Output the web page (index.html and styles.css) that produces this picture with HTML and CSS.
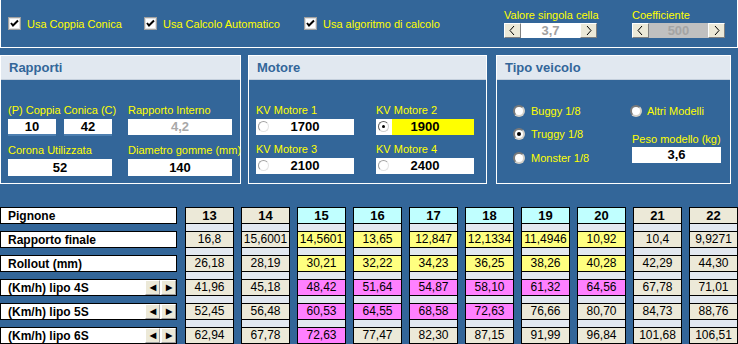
FILE: index.html
```html
<!DOCTYPE html>
<html lang="it">
<head>
    <meta charset="UTF-8">
    <title>Calcolo Rapporti</title>
    <link rel="stylesheet" href="styles.css">
</head>
<body>

    <!-- Opzioni in alto -->
    <div class="topbar">
        <div class="check c1">
            <svg class="box" width="13" height="13" viewBox="0 0 13 13"><rect x="0.5" y="0.5" width="12" height="12" fill="#fff" stroke="#a0a0a0"/><rect x="1.5" y="1.5" width="10" height="10" fill="#fff" stroke="#e0e0e0"/><polyline points="3,6 5,8.5 10,3.5" fill="none" stroke="#000" stroke-width="2"/></svg>
            Usa Coppia Conica
        </div>
        <div class="check c2">
            <svg class="box" width="13" height="13" viewBox="0 0 13 13"><rect x="0.5" y="0.5" width="12" height="12" fill="#fff" stroke="#a0a0a0"/><rect x="1.5" y="1.5" width="10" height="10" fill="#fff" stroke="#e0e0e0"/><polyline points="3,6 5,8.5 10,3.5" fill="none" stroke="#000" stroke-width="2"/></svg>
            Usa Calcolo Automatico
        </div>
        <div class="check c3">
            <svg class="box" width="13" height="13" viewBox="0 0 13 13"><rect x="0.5" y="0.5" width="12" height="12" fill="#fff" stroke="#a0a0a0"/><rect x="1.5" y="1.5" width="10" height="10" fill="#fff" stroke="#e0e0e0"/><polyline points="3,6 5,8.5 10,3.5" fill="none" stroke="#000" stroke-width="2"/></svg>
            Usa algoritmo di calcolo
        </div>

        <div class="spin-group s1">
            <div class="spin-label">Valore singola cella</div>
            <div class="spinner">
                <span class="spin-btn"><svg width="15" height="13" viewBox="0 0 15 13"><polyline points="9,2 5,6.5 9,11" fill="none" stroke="#000"/></svg></span>
                <span class="spin-val">3,7</span>
                <span class="spin-btn"><svg width="15" height="13" viewBox="0 0 15 13"><polyline points="6,2 10,6.5 6,11" fill="none" stroke="#000"/></svg></span>
            </div>
        </div>
        <div class="spin-group s2">
            <div class="spin-label">Coefficiente</div>
            <div class="spinner">
                <span class="spin-btn"><svg width="15" height="13" viewBox="0 0 15 13"><polyline points="9,2 5,6.5 9,11" fill="none" stroke="#000"/></svg></span>
                <span class="spin-val disabled">500</span>
                <span class="spin-btn"><svg width="15" height="13" viewBox="0 0 15 13"><polyline points="6,2 10,6.5 6,11" fill="none" stroke="#000"/></svg></span>
            </div>
        </div>
    </div>

    <!-- Pannelli -->
    <div class="panels">
        <div class="panel rapporti">
            <div class="panel-head">Rapporti</div>
            <div class="panel-body grid2">
                <div>
                    <div class="lbl">(P) Coppia Conica (C)</div>
                    <div class="pair">
                        <div class="field under">10</div>
                        <div class="field under">42</div>
                    </div>
                </div>
                <div>
                    <div class="lbl">Rapporto Interno</div>
                    <div class="field grey">4,2</div>
                </div>
                <div>
                    <div class="lbl">Corona Utilizzata</div>
                    <div class="field">52</div>
                </div>
                <div>
                    <div class="lbl">Diametro gomme (mm)</div>
                    <div class="field">140</div>
                </div>
            </div>
        </div>

        <div class="panel motore">
            <div class="panel-head">Motore</div>
            <div class="panel-body grid2">
                <div>
                    <div class="lbl">KV Motore 1</div>
                    <div class="field kv"><span class="mini-radio"></span>1700</div>
                </div>
                <div>
                    <div class="lbl">KV Motore 2</div>
                    <div class="field kv selected"><span class="mini-radio on"></span>1900</div>
                </div>
                <div>
                    <div class="lbl">KV Motore 3</div>
                    <div class="field kv"><span class="mini-radio"></span>2100</div>
                </div>
                <div>
                    <div class="lbl">KV Motore 4</div>
                    <div class="field kv"><span class="mini-radio"></span>2400</div>
                </div>
            </div>
        </div>

        <div class="panel veicolo">
            <div class="panel-head">Tipo veicolo</div>
            <div class="panel-body vgrid">
                <div class="vcol">
                    <div class="radio-row"><span class="radio"></span>Buggy 1/8</div>
                    <div class="radio-row"><span class="radio on"></span>Truggy 1/8</div>
                    <div class="radio-row"><span class="radio"></span>Monster 1/8</div>
                </div>
                <div class="vcol right">
                    <div class="radio-row"><span class="radio"></span>Altri Modelli</div>
                    <div class="lbl peso">Peso modello (kg)</div>
                    <div class="field">3,6</div>
                </div>
            </div>
        </div>
    </div>

    <!-- Tabella -->
    <div class="table">
        <div class="labels">
            <div class="row-label">Pignone</div>
            <div class="row-label">Rapporto finale</div>
            <div class="row-label">Rollout (mm)</div>
            <div class="row-label">(Km/h) lipo 4S<span class="arrows"><span class="arrow-btn">&#9664;</span><span class="arrow-btn">&#9654;</span></span></div>
            <div class="row-label">(Km/h) lipo 5S<span class="arrows"><span class="arrow-btn">&#9664;</span><span class="arrow-btn">&#9654;</span></span></div>
            <div class="row-label">(Km/h) lipo 6S<span class="arrows"><span class="arrow-btn">&#9664;</span><span class="arrow-btn">&#9654;</span></span></div>
        </div>

        <div class="col">
            <div class="cell head">13</div><div class="sep"></div>
            <div class="cell">16,8</div><div class="sep"></div>
            <div class="cell">26,18</div><div class="sep"></div>
            <div class="cell">41,96</div><div class="sep"></div>
            <div class="cell">52,45</div><div class="sep"></div>
            <div class="cell">62,94</div>
        </div>
        <div class="col">
            <div class="cell head">14</div><div class="sep"></div>
            <div class="cell">15,6001</div><div class="sep"></div>
            <div class="cell">28,19</div><div class="sep"></div>
            <div class="cell">45,18</div><div class="sep"></div>
            <div class="cell">56,48</div><div class="sep"></div>
            <div class="cell">67,78</div>
        </div>
        <div class="col">
            <div class="cell head cyan">15</div><div class="sep"></div>
            <div class="cell yellow">14,5601</div><div class="sep"></div>
            <div class="cell yellow">30,21</div><div class="sep"></div>
            <div class="cell pink">48,42</div><div class="sep"></div>
            <div class="cell pink">60,53</div><div class="sep"></div>
            <div class="cell pink">72,63</div>
        </div>
        <div class="col">
            <div class="cell head cyan">16</div><div class="sep"></div>
            <div class="cell yellow">13,65</div><div class="sep"></div>
            <div class="cell yellow">32,22</div><div class="sep"></div>
            <div class="cell pink">51,64</div><div class="sep"></div>
            <div class="cell pink">64,55</div><div class="sep"></div>
            <div class="cell">77,47</div>
        </div>
        <div class="col">
            <div class="cell head cyan">17</div><div class="sep"></div>
            <div class="cell yellow">12,847</div><div class="sep"></div>
            <div class="cell yellow">34,23</div><div class="sep"></div>
            <div class="cell pink">54,87</div><div class="sep"></div>
            <div class="cell pink">68,58</div><div class="sep"></div>
            <div class="cell">82,30</div>
        </div>
        <div class="col">
            <div class="cell head cyan">18</div><div class="sep"></div>
            <div class="cell yellow">12,1334</div><div class="sep"></div>
            <div class="cell yellow">36,25</div><div class="sep"></div>
            <div class="cell pink">58,10</div><div class="sep"></div>
            <div class="cell pink">72,63</div><div class="sep"></div>
            <div class="cell">87,15</div>
        </div>
        <div class="col">
            <div class="cell head cyan">19</div><div class="sep"></div>
            <div class="cell yellow">11,4946</div><div class="sep"></div>
            <div class="cell yellow">38,26</div><div class="sep"></div>
            <div class="cell pink">61,32</div><div class="sep"></div>
            <div class="cell">76,66</div><div class="sep"></div>
            <div class="cell">91,99</div>
        </div>
        <div class="col">
            <div class="cell head cyan">20</div><div class="sep"></div>
            <div class="cell yellow">10,92</div><div class="sep"></div>
            <div class="cell yellow">40,28</div><div class="sep"></div>
            <div class="cell pink">64,56</div><div class="sep"></div>
            <div class="cell">80,70</div><div class="sep"></div>
            <div class="cell">96,84</div>
        </div>
        <div class="col">
            <div class="cell head">21</div><div class="sep"></div>
            <div class="cell">10,4</div><div class="sep"></div>
            <div class="cell">42,29</div><div class="sep"></div>
            <div class="cell">67,78</div><div class="sep"></div>
            <div class="cell">84,73</div><div class="sep"></div>
            <div class="cell">101,68</div>
        </div>
        <div class="col">
            <div class="cell head">22</div><div class="sep"></div>
            <div class="cell">9,9271</div><div class="sep"></div>
            <div class="cell">44,30</div><div class="sep"></div>
            <div class="cell">71,01</div><div class="sep"></div>
            <div class="cell">88,76</div><div class="sep"></div>
            <div class="cell">106,51</div>
        </div>
    </div>

</body>
</html>
```

FILE: styles.css
```css
body {
    margin: 0;
    width: 738px;
    height: 344px;
    overflow: hidden;
    background-color: #336699;
    font-family: "Liberation Sans", Arial, sans-serif;
    font-size: 11px;
    color: #ffff00;
}

/* ---- barra in alto ---- */
.topbar {
    display: flex;
    align-items: flex-start;
    height: 48px;
    box-sizing: border-box;
    border: 1px solid #ffffff;
    border-top: none;
}

.check {
    display: flex;
    align-items: center;
    gap: 6px;
    height: 13px;
    margin-top: 17px;
    white-space: nowrap;
}

.check .box {
    flex: none;
}

.c1 { margin-left: 7px; width: 136px; }
.c2 { width: 160px; }
.c3 { width: 200px; }

.spin-group {
    margin-top: 8px;
}

.s1 { width: 128px; }

.spin-label {
    line-height: 14px;
    height: 14px;
    margin-bottom: 1px;
}

.spinner {
    display: flex;
    height: 15px;
}

.spin-btn {
    display: flex;
    width: 17px;
    height: 15px;
    box-sizing: border-box;
    background-color: #ece9d8;
    border: 1px solid;
    border-color: #ffffff #808080 #808080 #ffffff;
}

.spin-val {
    width: 59px;
    background-color: #ffffff;
    color: #a0a0a0;
    font-weight: bold;
    font-size: 13px;
    line-height: 15px;
    text-align: center;
}

.spin-val.disabled {
    background-color: #c0c0c0;
    color: #a4a4a4;
}

/* ---- pannelli ---- */
.panels {
    display: flex;
    margin-top: 7px;
}

.panel {
    height: 129px;
    box-sizing: border-box;
    border: 1px solid #ffffff;
}

.rapporti { width: 241px; }
.motore { width: 239px; margin-left: 7px; }
.veicolo { width: 235px; margin-left: 9px; }

.panel-head {
    height: 23px;
    line-height: 23px;
    padding-left: 8px;
    background-color: #e1e8f0;
    border-bottom: 1px solid #c4cfdc;
    color: #336699;
    font-weight: bold;
    font-size: 13px;
}

.panel-body {
    padding: 23px 0 0 7px;
}

.grid2 {
    display: grid;
    grid-template-columns: 104px 104px;
    column-gap: 16px;
    row-gap: 7px;
}

.motore .grid2 {
    grid-template-columns: 98px 98px;
    column-gap: 22px;
}

.lbl {
    height: 14px;
    line-height: 14px;
    margin-bottom: 2px;
    white-space: nowrap;
}

.pair {
    display: flex;
    gap: 8px;
}

.pair .field {
    width: 48px;
}

.field {
    height: 17px;
    line-height: 17px;
    box-sizing: border-box;
    background-color: #ffffff;
    color: #000000;
    font-weight: bold;
    font-size: 13px;
    text-align: center;
}

.field.under {
    border-bottom: 2px solid #4d7fb0;
    line-height: 15px;
}

.field.grey {
    color: #a8a8a8;
    height: 16px;
    line-height: 16px;
}

.field.kv {
    position: relative;
    height: 16px;
    line-height: 16px;
}

.field.selected {
    background: linear-gradient(to right, #ffffff 16px, #ffff00 16px);
}

.mini-radio {
    position: absolute;
    left: 2px;
    top: 2px;
    width: 11px;
    height: 11px;
    box-sizing: border-box;
    border-radius: 50%;
    border: 1px solid;
    border-color: #a0a0a0 #e4e4e4 #e4e4e4 #a0a0a0;
}

.mini-radio.on {
    border-color: #606060 #d0d0d0 #d0d0d0 #606060;
}

.mini-radio.on::after {
    content: "";
    position: absolute;
    left: 3px;
    top: 3px;
    width: 3px;
    height: 3px;
    border-radius: 50%;
    background-color: #000000;
}

/* tipo veicolo */
.veicolo .panel-body {
    padding: 21px 0 0 16px;
}

.vgrid {
    display: flex;
}

.vcol {
    width: 117px;
}

.vcol.right {
    width: 89px;
}

.radio-row {
    display: flex;
    align-items: center;
    gap: 6px;
    height: 20px;
    margin-bottom: 3px;
    white-space: nowrap;
}

.radio-row:nth-child(2) {
    margin-bottom: 4px;
}

.vcol.right .radio-row {
    gap: 5px;
}

.radio {
    position: relative;
    flex: none;
    width: 12px;
    height: 12px;
    box-sizing: border-box;
    border-radius: 50%;
    background-color: #ffffff;
    border: 2px solid;
    border-color: #7a7a7a #d4d0c8 #d4d0c8 #7a7a7a;
}

.radio.on::after {
    content: "";
    position: absolute;
    left: 2px;
    top: 2px;
    width: 4px;
    height: 4px;
    border-radius: 50%;
    background-color: #000000;
}

.lbl.peso {
    margin-top: 11px;
    margin-bottom: 1px;
    margin-left: 2px;
}

.vcol.right .field {
    width: 89px;
    margin-left: 2px;
    height: 16px;
    line-height: 16px;
}

/* ---- tabella ---- */
.table {
    display: flex;
    gap: 7px;
    margin-top: 23px;
}

.labels {
    display: flex;
    flex-direction: column;
    gap: 7px;
    width: 177px;
    margin-right: 1px;
}

.row-label {
    display: flex;
    align-items: center;
    height: 17px;
    box-sizing: border-box;
    border: 1px solid #000000;
    background-color: #ffffff;
    color: #000000;
    font-weight: bold;
    font-size: 12px;
    padding-left: 7px;
}

.arrows {
    display: flex;
    gap: 1px;
    margin-left: auto;
    margin-right: 0;
}

.arrow-btn {
    width: 15px;
    height: 15px;
    box-sizing: border-box;
    background-color: #ece9d8;
    border: 1px solid;
    border-color: #ffffff #a0a0a0 #a0a0a0 #ffffff;
    font-size: 8px;
    line-height: 13px;
    text-align: center;
    color: #000000;
}

.col {
    display: flex;
    flex-direction: column;
    width: 49px;
    box-sizing: border-box;
    border-left: 1px solid #000000;
    border-right: 1px solid #000000;
}

.cell {
    height: 17px;
    box-sizing: border-box;
    border-top: 1px solid #000000;
    border-bottom: 1px solid #000000;
    background-color: #ece9d8;
    color: #000000;
    font-size: 12px;
    line-height: 15px;
    text-align: center;
}

.cell.head {
    font-weight: bold;
    font-size: 13px;
}

.sep {
    height: 7px;
    background-color: #e2e8f0;
}

.cyan { background-color: #c0ffff; }
.yellow { background-color: #ffff80; }
.pink { background-color: #ff80ff; }
```
